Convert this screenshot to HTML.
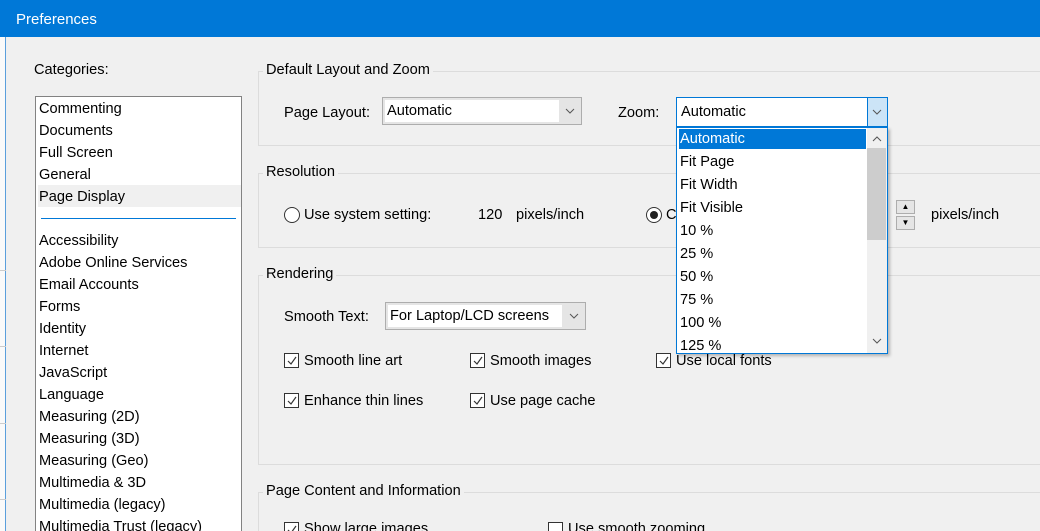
<!DOCTYPE html>
<html><head><style>
*{margin:0;padding:0;box-sizing:border-box}
html,body{width:1040px;height:531px;overflow:hidden}
body{background:#f0f0f0;font-family:"Liberation Sans",sans-serif;font-size:14.6px;color:#000;position:relative}
.a{position:absolute;white-space:nowrap}
.title{left:0;top:0;width:1040px;height:37px;background:#0078d7;color:#fff;font-size:15px;padding:11px 0 0 16px}
.strip{left:0;top:37px;width:6px;height:494px;background:#fafafa;border-right:1px solid #5a9fdc}
.gb{position:absolute;border:1px solid #dcdcdc;border-right:none}
.gl{position:absolute;background:#f0f0f0;padding:0 3px}
.list{left:35px;top:96px;width:207px;height:440px;background:#fff;border:1px solid #828282}
.it{position:absolute;left:3px}
.cb{position:absolute;width:15px;height:15px;border:1px solid #333;background:#fff}
.cb svg{position:absolute;left:1px;top:1px}
.sel{position:absolute;border:1px solid #adadad}
</style></head><body>
<div class="a title">Preferences</div>
<div class="a strip"></div>
<div class="a" style="left:0;top:270px;width:6px;height:1px;background:#ccc"></div>
<div class="a" style="left:0;top:346px;width:6px;height:1px;background:#ccc"></div>
<div class="a" style="left:0;top:423px;width:6px;height:1px;background:#ccc"></div>
<div class="a" style="left:0;top:499px;width:6px;height:1px;background:#ccc"></div>

<div class="a" style="left:34px;top:62px">Categories:</div>
<div class="a list">
<div class="a" style="left:2px;top:88px;width:203px;height:22px;background:#f0f0f0"></div>
<div class="it" style="top:4px">Commenting</div>
<div class="it" style="top:26px">Documents</div>
<div class="it" style="top:48px">Full Screen</div>
<div class="it" style="top:70px">General</div>
<div class="it" style="top:92px">Page Display</div>
<div class="a" style="left:5px;top:121px;width:195px;height:1px;background:#0078d7"></div>
<div class="it" style="top:136px">Accessibility</div>
<div class="it" style="top:158px">Adobe Online Services</div>
<div class="it" style="top:180px">Email Accounts</div>
<div class="it" style="top:202px">Forms</div>
<div class="it" style="top:224px">Identity</div>
<div class="it" style="top:246px">Internet</div>
<div class="it" style="top:268px">JavaScript</div>
<div class="it" style="top:290px">Language</div>
<div class="it" style="top:312px">Measuring (2D)</div>
<div class="it" style="top:334px">Measuring (3D)</div>
<div class="it" style="top:356px">Measuring (Geo)</div>
<div class="it" style="top:378px">Multimedia &amp; 3D</div>
<div class="it" style="top:400px">Multimedia (legacy)</div>
<div class="it" style="top:422px">Multimedia Trust (legacy)</div>
</div>

<div class="gb" style="left:258px;top:71px;width:790px;height:75px"></div>
<div class="gl" style="left:263px;top:62px">Default Layout and Zoom</div>
<div class="a" style="left:284px;top:105px">Page Layout:</div>
<div class="sel" style="left:382px;top:97px;width:200px;height:28px;background:#e5e5e5"><div class="a" style="left:2px;top:2px;width:174px;height:22px;background:#fff"></div><div class="a" style="left:4px;top:5px">Automatic</div><svg class="a" style="left:182px;top:10px" width="10" height="6"><path d="M1 1 L5 5 L9 1" stroke="#555" fill="none"/></svg></div>
<div class="a" style="left:618px;top:105px">Zoom:</div>
<div class="a" style="left:676px;top:97px;width:212px;height:30px;background:#fff;border:1px solid #0078d7"><div class="a" style="left:4px;top:6px">Automatic</div><div class="a" style="left:190px;top:0;width:20px;height:28px;background:#cce4f7;border-left:1px solid #0078d7"></div><svg class="a" style="left:195px;top:11px" width="10" height="6"><path d="M1 1 L5 5 L9 1" stroke="#555" fill="none"/></svg></div>

<div class="gb" style="left:258px;top:173px;width:790px;height:75px"></div>
<div class="gl" style="left:263px;top:164px">Resolution</div>
<div class="a" style="left:284px;top:207px;width:16px;height:16px;border:1px solid #333;border-radius:50%;background:#fff"></div>
<div class="a" style="left:304px;top:207px">Use system setting:</div>
<div class="a" style="left:478px;top:207px">120</div>
<div class="a" style="left:516px;top:207px">pixels/inch</div>
<div class="a" style="left:646px;top:207px;width:16px;height:16px;border:1px solid #333;border-radius:50%;background:#fff"><div class="a" style="left:3px;top:3px;width:8px;height:8px;border-radius:50%;background:#222"></div></div>
<div class="a" style="left:666px;top:207px">C</div>
<div class="a" style="left:896px;top:200px;width:19px;height:14px;border:1px solid #adadad;background:#e5e5e5;font-size:8px;text-align:center;line-height:12px">▲</div>
<div class="a" style="left:896px;top:216px;width:19px;height:14px;border:1px solid #adadad;background:#e5e5e5;font-size:8px;text-align:center;line-height:12px">▼</div>
<div class="a" style="left:931px;top:207px">pixels/inch</div>

<div class="gb" style="left:258px;top:275px;width:790px;height:190px"></div>
<div class="gl" style="left:263px;top:266px">Rendering</div>
<div class="a" style="left:284px;top:309px">Smooth Text:</div>
<div class="sel" style="left:385px;top:302px;width:201px;height:28px;background:#e5e5e5"><div class="a" style="left:2px;top:2px;width:174px;height:22px;background:#fff"></div><div class="a" style="left:4px;top:5px">For Laptop/LCD screens</div><svg class="a" style="left:183px;top:10px" width="10" height="6"><path d="M1 1 L5 5 L9 1" stroke="#555" fill="none"/></svg></div>

<div class="cb" style="left:284px;top:353px"><svg width="12" height="12"><path d="M2 6 L5 9 L10 2" stroke="#333" fill="none" stroke-width="1.2"/></svg></div>
<div class="a" style="left:304px;top:353px">Smooth line art</div>
<div class="cb" style="left:470px;top:353px"><svg width="12" height="12"><path d="M2 6 L5 9 L10 2" stroke="#333" fill="none" stroke-width="1.2"/></svg></div>
<div class="a" style="left:490px;top:353px">Smooth images</div>
<div class="cb" style="left:656px;top:353px"><svg width="12" height="12"><path d="M2 6 L5 9 L10 2" stroke="#333" fill="none" stroke-width="1.2"/></svg></div>
<div class="a" style="left:676px;top:353px">Use local fonts</div>
<div class="cb" style="left:284px;top:393px"><svg width="12" height="12"><path d="M2 6 L5 9 L10 2" stroke="#333" fill="none" stroke-width="1.2"/></svg></div>
<div class="a" style="left:304px;top:393px">Enhance thin lines</div>
<div class="cb" style="left:470px;top:393px"><svg width="12" height="12"><path d="M2 6 L5 9 L10 2" stroke="#333" fill="none" stroke-width="1.2"/></svg></div>
<div class="a" style="left:490px;top:393px">Use page cache</div>

<div class="gb" style="left:258px;top:492px;width:790px;height:60px"></div>
<div class="gl" style="left:263px;top:483px">Page Content and Information</div>
<div class="cb" style="left:284px;top:522px"><svg width="12" height="12"><path d="M2 6 L5 9 L10 2" stroke="#333" fill="none" stroke-width="1.2"/></svg></div>
<div class="a" style="left:304px;top:521px">Show large images</div>
<div class="cb" style="left:548px;top:522px"></div>
<div class="a" style="left:568px;top:521px">Use smooth zooming</div>

<div class="a" style="left:676px;top:127px;width:212px;height:227px;background:#fff;border:1px solid #0078d7;box-shadow:2px 2px 3px rgba(0,0,0,.25);overflow:hidden">
<div class="a" style="left:2px;top:1px;width:187px;height:20px;background:#0078d7"></div>
<div class="a" style="left:3px;top:3px;color:#fff">Automatic</div>
<div class="a" style="left:3px;top:26px">Fit Page</div>
<div class="a" style="left:3px;top:49px">Fit Width</div>
<div class="a" style="left:3px;top:72px">Fit Visible</div>
<div class="a" style="left:3px;top:95px">10 %</div>
<div class="a" style="left:3px;top:118px">25 %</div>
<div class="a" style="left:3px;top:141px">50 %</div>
<div class="a" style="left:3px;top:164px">75 %</div>
<div class="a" style="left:3px;top:187px">100 %</div>
<div class="a" style="left:3px;top:210px">125 %</div>
<div class="a" style="left:190px;top:0;width:20px;height:226px;background:#f0f0f0"></div>
<div class="a" style="left:190px;top:20px;width:19px;height:92px;background:#cdcdcd"></div>
<svg class="a" style="left:195px;top:8px" width="10" height="6"><path d="M1 5 L5 1 L9 5" stroke="#555" fill="none"/></svg>
<svg class="a" style="left:195px;top:210px" width="10" height="6"><path d="M1 1 L5 5 L9 1" stroke="#555" fill="none"/></svg>
</div>
</body></html>
